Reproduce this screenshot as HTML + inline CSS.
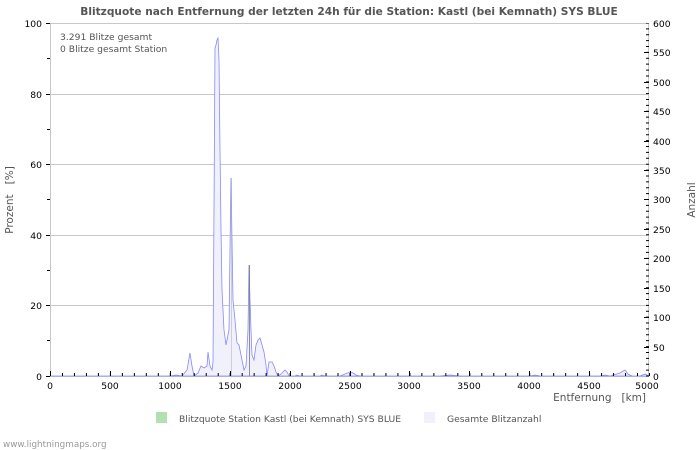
<!DOCTYPE html>
<html><head><meta charset="utf-8"><style>
body{margin:0;background:#fff;}
svg{display:block;font-family:"DejaVu Sans","Liberation Sans",sans-serif;}
</style></head><body>
<svg width="700" height="450" viewBox="0 0 700 450">
<text x="349" y="15" text-anchor="middle" font-size="10.6" font-weight="bold" fill="#555">Blitzquote nach Entfernung der letzten 24h für die Station: Kastl (bei Kemnath) SYS BLUE</text>
<g stroke="#c8c8c8" stroke-width="1">
<line x1="50" y1="23.5" x2="649" y2="23.5"/>
<line x1="50" y1="94.5" x2="649" y2="94.5"/>
<line x1="50" y1="164.5" x2="649" y2="164.5"/>
<line x1="50" y1="235.5" x2="649" y2="235.5"/>
<line x1="50" y1="305.5" x2="649" y2="305.5"/>
<line x1="50.5" y1="23" x2="50.5" y2="376"/>
<line x1="648.5" y1="23" x2="648.5" y2="376"/>
<line x1="50" y1="376.5" x2="649" y2="376.5"/>
</g>
<polygon fill="#f1f1fc" stroke="#8888ff" stroke-width="0.8" points="50,376 170,376 176,375 182,376 187,370 190,353 192,366 194,376 198,373 201,366 204,368 207,366 208,352 210,366 212,370 213,362 214,210 215,48 216,45 217,40 218,38 219,60 220,150 221,230 222,290 224,330 226,345 228,335 229,330 230,250 231,178 232,240 233,300 235,320 237,343 239,345 241,355 244,370 246,366 248,330 249,265 250,300 251,330 252,355 254,360 256,345 258,340 260,338 262,345 264,352 266,365 267,376 269,362 272,362 274,366 276,372 278,376 281,374 285,370 287,372 289,376 295,376 297,375 300,376 320,376 322,375 325,376 340,376 345,374 350,372 353,373 356,375 360,376 400,376 440,376 450,375 460,376 530,376 535,375 540,376 600,376 605,375 610,376 620,373 625,370 628,374 632,376 640,376 645,374 649,376"/>
<line x1="249.5" y1="265" x2="249.5" y2="376" stroke="#777" stroke-width="0.8"/>
<line x1="231.5" y1="178" x2="231.5" y2="376" stroke="#aaa" stroke-width="0.5"/>
<g stroke="#000" stroke-width="1">
<line x1="46" y1="23.5" x2="50" y2="23.5"/><line x1="46" y1="94.5" x2="50" y2="94.5"/><line x1="46" y1="164.5" x2="50" y2="164.5"/><line x1="46" y1="235.5" x2="50" y2="235.5"/><line x1="46" y1="305.5" x2="50" y2="305.5"/><line x1="46" y1="376.5" x2="50" y2="376.5"/>
<line x1="47" y1="58.5" x2="50" y2="58.5"/><line x1="47" y1="129.5" x2="50" y2="129.5"/><line x1="47" y1="199.5" x2="50" y2="199.5"/><line x1="47" y1="270.5" x2="50" y2="270.5"/><line x1="47" y1="340.5" x2="50" y2="340.5"/>
</g>
<g stroke="#000" stroke-width="1">
<line x1="647.5" y1="23" x2="647.5" y2="377" stroke-width="3" stroke-dasharray="1 4.883" stroke-dashoffset="0.5"/>
<line x1="50" y1="374.5" x2="650" y2="374.5" stroke-width="3" stroke-dasharray="1 10.98"/>
</g>
<g stroke="#000" stroke-width="1">
<line x1="50.5" y1="371" x2="50.5" y2="376"/><line x1="110.5" y1="371" x2="110.5" y2="376"/><line x1="170.5" y1="371" x2="170.5" y2="376"/><line x1="230.5" y1="371" x2="230.5" y2="376"/><line x1="290.5" y1="371" x2="290.5" y2="376"/><line x1="350.5" y1="371" x2="350.5" y2="376"/><line x1="409.5" y1="371" x2="409.5" y2="376"/><line x1="469.5" y1="371" x2="469.5" y2="376"/><line x1="529.5" y1="371" x2="529.5" y2="376"/><line x1="589.5" y1="371" x2="589.5" y2="376"/>
<line x1="644" y1="52.5" x2="649" y2="52.5"/><line x1="644" y1="82.5" x2="649" y2="82.5"/><line x1="644" y1="111.5" x2="649" y2="111.5"/><line x1="644" y1="141.5" x2="649" y2="141.5"/><line x1="644" y1="170.5" x2="649" y2="170.5"/><line x1="644" y1="199.5" x2="649" y2="199.5"/><line x1="644" y1="229.5" x2="649" y2="229.5"/><line x1="644" y1="258.5" x2="649" y2="258.5"/><line x1="644" y1="288.5" x2="649" y2="288.5"/><line x1="644" y1="317.5" x2="649" y2="317.5"/><line x1="644" y1="347.5" x2="649" y2="347.5"/>
</g>
<g font-size="9.2" fill="#000" text-anchor="end">
<text x="42" y="27">100</text><text x="42" y="98">80</text><text x="42" y="168">60</text><text x="42" y="239">40</text><text x="42" y="309">20</text><text x="42" y="380">0</text>
</g>
<g font-size="9.2" fill="#000">
<text x="653" y="27">600</text><text x="653" y="56">550</text><text x="653" y="86">500</text><text x="653" y="115">450</text><text x="653" y="145">400</text><text x="653" y="174">350</text><text x="653" y="203">300</text><text x="653" y="233">250</text><text x="653" y="262">200</text><text x="653" y="292">150</text><text x="653" y="321">100</text><text x="653" y="351">50</text><text x="653" y="380">0</text>
</g>
<g font-size="9.2" fill="#000" text-anchor="middle">
<text x="50" y="389">0</text><text x="110" y="389">500</text><text x="170" y="389">1000</text><text x="230" y="389">1500</text><text x="290" y="389">2000</text><text x="350" y="389">2500</text><text x="409" y="389">3000</text><text x="469" y="389">3500</text><text x="529" y="389">4000</text><text x="589" y="389">4500</text><text x="647" y="389">5000</text>
</g>
<text x="60" y="40" font-size="9.2" fill="#555">3.291 Blitze gesamt</text>
<text x="60" y="52" font-size="9.2" fill="#555">0 Blitze gesamt Station</text>
<text x="646" y="401" font-size="10.5" fill="#555" text-anchor="end">Entfernung&#160;&#160;&#160;[km]</text>
<text transform="translate(13,200) rotate(-90)" font-size="10.5" fill="#555" text-anchor="middle">Prozent&#160;&#160;&#160;[%]</text>
<text transform="translate(695,200) rotate(-90)" font-size="10.5" fill="#555" text-anchor="middle">Anzahl</text>
<rect x="156" y="412" width="11" height="11" fill="#b3e0b3"/>
<text x="179" y="422" font-size="9.2" fill="#555">Blitzquote Station Kastl (bei Kemnath) SYS BLUE</text>
<rect x="424" y="412" width="11" height="11" fill="#f1f1fc"/>
<text x="447" y="422" font-size="9.2" fill="#555">Gesamte Blitzanzahl</text>
<text x="3" y="447" font-size="8.8" fill="#999">www.lightningmaps.org</text>
</svg>
</body></html>
